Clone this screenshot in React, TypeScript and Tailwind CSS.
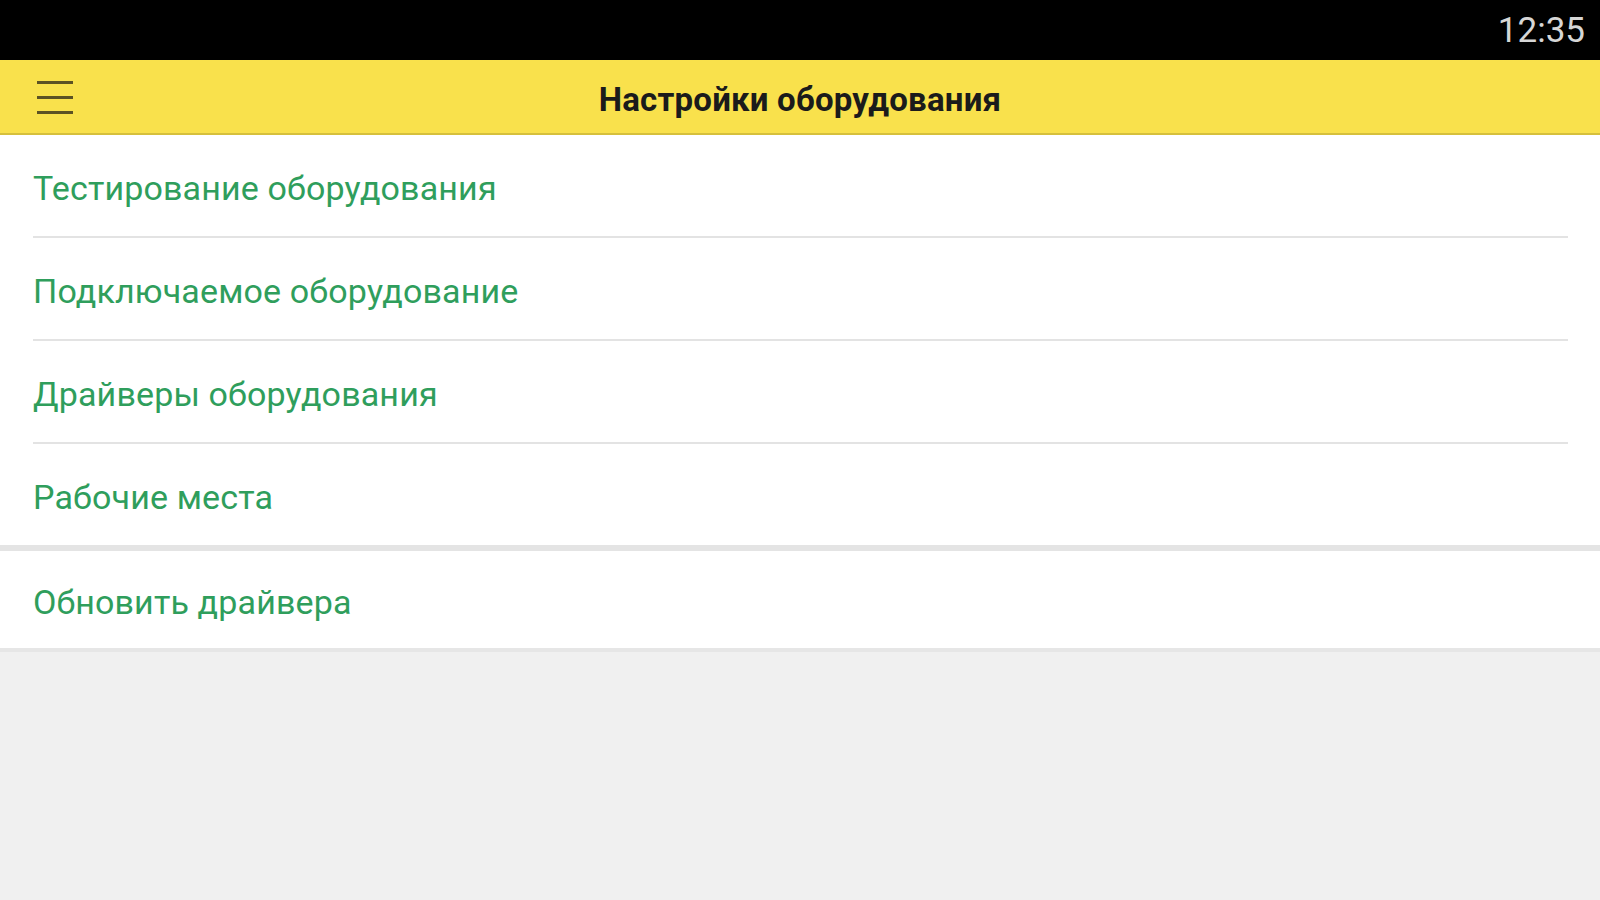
const items = [
  'Тестирование оборудования',
  'Подключаемое оборудование',
  'Драйверы оборудования',
  'Рабочие места',
];

function Row({ label, last }: { label: string; last?: boolean }) {
  return (
    <div className={`flex flex-col bg-white ${last ? 'h-[101px]' : 'h-[103px]'}`}>
      <div className="flex flex-1 items-center pl-[33px] pt-[4px]">
        <span className="text-[34px] leading-none tracking-[0.15px] text-[#2f9e5c]">{label}</span>
      </div>
      {!last && <div className="ml-[33px] mr-[32px] h-[2px] bg-[#e3e3e3]" />}
    </div>
  );
}

export default function App() {
  return (
    <div className="flex min-h-screen flex-col bg-[#f0f0f0] font-['Roboto',sans-serif]">
      <div className="flex h-[60px] items-center justify-end bg-black pr-[15px]">
        <span className="text-[35px] leading-none text-[#d6d6d6]">12:35</span>
      </div>
      <header className="relative flex h-[75px] items-center justify-center border-b-2 border-[#d6c03c] bg-[#f9e14c] pt-[6px]">
        <button className="absolute left-[37px] top-[21px] flex w-[36px] flex-col gap-[12px]">
          <span className="h-[3px] w-full bg-[#5c5224]" />
          <span className="h-[3px] w-full bg-[#5c5224]" />
          <span className="h-[3px] w-full bg-[#5c5224]" />
        </button>
        <h1 className="text-[33px] font-bold leading-none tracking-[0.2px] text-[#1b1b1b]">Настройки оборудования</h1>
      </header>
      <div>
        {items.map((label, i) => (
          <Row key={label} label={label} last={i === items.length - 1} />
        ))}
      </div>
      <div className="h-[6px] bg-[#e4e4e4]" />
      <div className="flex h-[97px] items-center bg-white pl-[33px] pt-[4px]">
        <span className="text-[34px] leading-none tracking-[0.15px] text-[#2f9e5c]">Обновить драйвера</span>
      </div>
      <div className="h-[4px] bg-[#e6e6e6]" />
    </div>
  );
}
